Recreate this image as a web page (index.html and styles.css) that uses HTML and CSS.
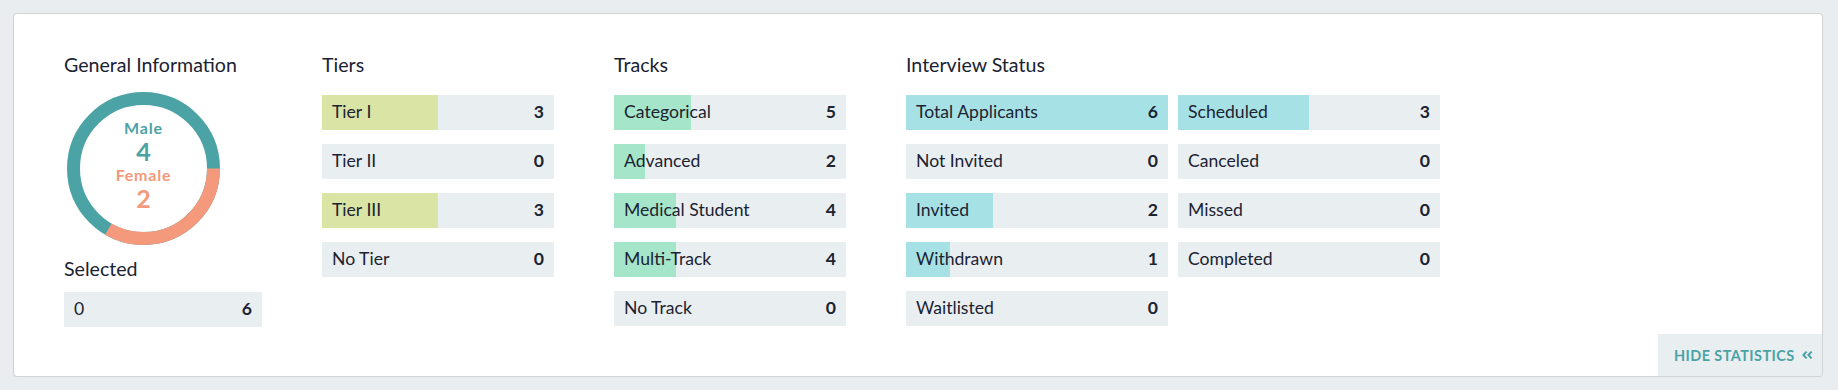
FILE: index.html
```html
<!DOCTYPE html>
<html lang="en">
<head>
<meta charset="utf-8">
<title>Statistics</title>
<link rel="stylesheet" href="styles.css">
</head>
<body>
<div class="card">
  <div class="stats">
    <section class="col col-general">
      <h3 class="heading">General Information</h3>
      <div class="donut">
        <svg class="donut-svg" width="153" height="153" viewBox="0 0 153 153">
          <circle cx="76.5" cy="76.5" r="70" fill="none" stroke="#4ca3a5" stroke-width="13"/>
          <circle cx="76.5" cy="76.5" r="70" fill="none" stroke="#f4997b" stroke-width="13" stroke-dasharray="146.61 293.22"/>
        </svg>
        <div class="donut-text">
          <div class="g-label male">Male</div>
          <div class="g-num male">4</div>
          <div class="g-label female">Female</div>
          <div class="g-num female">2</div>
        </div>
      </div>
      <h3 class="heading heading-selected">Selected</h3>
      <div class="bar bar-general"><span class="label">0</span><span class="num">6</span></div>
    </section>

    <section class="col col-tiers">
      <h3 class="heading">Tiers</h3>
      <div class="rows">
        <div class="bar fill-tier" style="--pct:50%"><span class="label">Tier I</span><span class="num">3</span></div>
        <div class="bar fill-tier" style="--pct:0%"><span class="label">Tier II</span><span class="num">0</span></div>
        <div class="bar fill-tier" style="--pct:50%"><span class="label">Tier III</span><span class="num">3</span></div>
        <div class="bar fill-tier" style="--pct:0%"><span class="label">No Tier</span><span class="num">0</span></div>
      </div>
    </section>

    <section class="col col-tracks">
      <h3 class="heading">Tracks</h3>
      <div class="rows">
        <div class="bar fill-track" style="--pct:33.33%"><span class="label">Categorical</span><span class="num">5</span></div>
        <div class="bar fill-track" style="--pct:13.33%"><span class="label">Advanced</span><span class="num">2</span></div>
        <div class="bar fill-track" style="--pct:26.67%"><span class="label">Medical Student</span><span class="num">4</span></div>
        <div class="bar fill-track" style="--pct:26.67%"><span class="label">Multi-Track</span><span class="num">4</span></div>
        <div class="bar fill-track" style="--pct:0%"><span class="label">No Track</span><span class="num">0</span></div>
      </div>
    </section>

    <section class="col col-interview">
      <h3 class="heading">Interview Status</h3>
      <div class="interview-grid">
        <div class="rows rows-interview">
          <div class="bar fill-int" style="--pct:100%"><span class="label">Total Applicants</span><span class="num">6</span></div>
          <div class="bar fill-int" style="--pct:0%"><span class="label">Not Invited</span><span class="num">0</span></div>
          <div class="bar fill-int" style="--pct:33.33%"><span class="label">Invited</span><span class="num">2</span></div>
          <div class="bar fill-int" style="--pct:16.67%"><span class="label">Withdrawn</span><span class="num">1</span></div>
          <div class="bar fill-int" style="--pct:0%"><span class="label">Waitlisted</span><span class="num">0</span></div>
        </div>
        <div class="rows rows-interview">
          <div class="bar fill-int" style="--pct:50%"><span class="label">Scheduled</span><span class="num">3</span></div>
          <div class="bar fill-int" style="--pct:0%"><span class="label">Canceled</span><span class="num">0</span></div>
          <div class="bar fill-int" style="--pct:0%"><span class="label">Missed</span><span class="num">0</span></div>
          <div class="bar fill-int" style="--pct:0%"><span class="label">Completed</span><span class="num">0</span></div>
        </div>
      </div>
    </section>
  </div>

  <div class="footer">
    <button class="hide-btn" type="button"><span class="hide-text">HIDE STATISTICS</span><svg class="chev" width="11" height="8" viewBox="0 0 11 8"><path d="M4.6 0.6 L1.4 4 L4.6 7.4 M9.6 0.6 L6.4 4 L9.6 7.4" fill="none" stroke="#4ca3a5" stroke-width="2"/></svg></button>
  </div>
</div>
</body>
</html>
```

FILE: styles.css
```css
* { box-sizing: border-box; }

html, body {
  margin: 0;
  padding: 0;
}

body {
  background: #e9edf0;
  font-family: Lato, "Liberation Sans", sans-serif;
  color: #1c2331;
  padding-top: 13px;
}

.card {
  margin: 0 15px 0 13px;
  height: 364px;
  background: #ffffff;
  border: 1px solid #d0d4d7;
  border-radius: 4px;
  box-shadow: 0 1px 1px rgba(0, 0, 0, 0.06);
  overflow: hidden;
  display: flex;
  flex-direction: column;
}

.stats {
  display: flex;
  align-items: flex-start;
  gap: 60px;
  padding: 41px 0 0 50px;
}

.col {
  display: flex;
  flex-direction: column;
}

.col-general { width: 198px; }
.col-tiers, .col-tracks { width: 232px; }

.heading {
  margin: 0 0 21px 0;
  font-size: 19.6px;
  line-height: 19px;
  font-weight: 400;
  color: #1a2232;
}

.donut {
  display: grid;
  width: 153px;
  height: 153px;
  margin: -3px 0 0 3px;
}

.donut-svg, .donut-text {
  grid-area: 1 / 1;
}

.donut-text {
  align-self: center;
  justify-self: center;
  text-align: center;
  margin-bottom: 7px;
}

.g-label {
  font-size: 16px;
  line-height: 18px;
  font-weight: 700;
  letter-spacing: 0.8px;
}

.g-num {
  font-size: 25px;
  line-height: 28px;
  font-weight: 700;
}

.g-label.female { margin-top: 1px; }

.male { color: #4ca3a5; }
.female { color: #f4997b; }

.heading-selected {
  margin-top: 14px;
  margin-bottom: 14px;
}

.rows {
  display: flex;
  flex-direction: column;
  gap: 14px;
}

.bar {
  height: 35px;
  line-height: 33px;
  display: flex;
  justify-content: space-between;
  padding: 0 10px 0 10px;
  font-size: 17.6px;
  background: #e9eef1;
  color: #1c2331;
}

.bar .num { font-weight: 700; }

.fill-tier {
  background: linear-gradient(to right, #d9e4a5 var(--pct), #e9eef1 var(--pct));
}

.fill-track {
  background: linear-gradient(to right, #a5e5c9 var(--pct), #e9eef1 var(--pct));
}

.fill-int {
  background: linear-gradient(to right, #a6e2e5 var(--pct), #e9eef1 var(--pct));
}

.interview-grid {
  display: flex;
  gap: 10px;
  align-items: flex-start;
}

.rows-interview { width: 262px; }

.footer {
  margin-top: auto;
  display: flex;
  justify-content: flex-end;
}

.hide-btn {
  height: 42px;
  width: 164px;
  border: 0;
  margin: 0;
  padding: 0 0 0 16px;
  background: #e9eef1;
  color: #4ca3a5;
  font-family: Lato, "Liberation Sans", sans-serif;
  font-size: 14.5px;
  font-weight: 700;
  letter-spacing: 0.4px;
  white-space: nowrap;
  display: flex;
  align-items: center;
  justify-content: flex-start;
  gap: 7px;
  cursor: pointer;
}

.hide-text { display: block; }

.chev { display: block; flex: none; }
```
